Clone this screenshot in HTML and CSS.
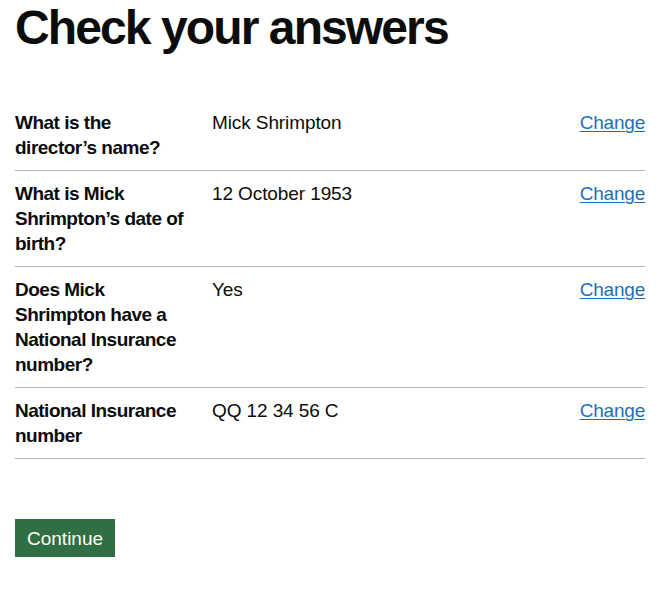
FILE: index.html
```html
<!DOCTYPE html>
<html lang="en">
<head>
<meta charset="utf-8">
<title>Check your answers</title>
<link rel="stylesheet" href="styles.css">
</head>
<body>
<main class="page">
  <h1 class="heading">Check your answers</h1>
  <dl class="summary">
    <div class="row">
      <dt class="key">What is the director’s name?</dt>
      <dd class="value">Mick Shrimpton</dd>
      <dd class="actions"><a class="link" href="#">Change</a></dd>
    </div>
    <div class="row">
      <dt class="key">What is Mick Shrimpton’s date of birth?</dt>
      <dd class="value">12 October 1953</dd>
      <dd class="actions"><a class="link" href="#">Change</a></dd>
    </div>
    <div class="row">
      <dt class="key">Does Mick Shrimpton have a National Insurance number?</dt>
      <dd class="value">Yes</dd>
      <dd class="actions"><a class="link" href="#">Change</a></dd>
    </div>
    <div class="row">
      <dt class="key">National Insurance number</dt>
      <dd class="value">QQ 12 34 56 C</dd>
      <dd class="actions"><a class="link" href="#">Change</a></dd>
    </div>
  </dl>
  <button class="button" type="button">Continue</button>
</main>
</body>
</html>
```

FILE: styles.css
```css
html, body {
  margin: 0;
  padding: 0;
  background: #ffffff;
}
body {
  font-family: "Liberation Sans", Arial, sans-serif;
  color: #0b0c0c;
}
.page {
  padding: 0 15px;
}
.heading {
  margin: 0 0 47px;
  padding-top: 3px;
  font-size: 48px;
  line-height: 50px;
  font-weight: 700;
  letter-spacing: -1.9px;
}
.summary {
  margin: 0 0 60px;
  font-size: 19px;
  line-height: 25px;
}
.row {
  display: grid;
  grid-template-columns: 177px 1fr auto;
  column-gap: 20px;
  border-bottom: 1px solid #b1b4b6;
  padding: 10px 0;
}
.key {
  margin: 0;
  font-weight: 700;
  letter-spacing: -0.5px;
}
.value {
  margin: 0;
  letter-spacing: -0.1px;
}
.actions {
  margin: 0;
  text-align: right;
}
.link {
  color: #1d70b8;
  text-decoration: underline;
  text-decoration-thickness: 1px;
  text-underline-offset: 2px;
  letter-spacing: -0.2px;
}
.button {
  font-family: "Liberation Sans", Arial, sans-serif;
  font-size: 19px;
  line-height: 19px;
  color: #ffffff;
  background: #306e43;
  border: 2px solid transparent;
  border-radius: 0;
  padding: 8px 10px 7px;
  margin: 0;
  box-shadow: 0 2px 0 #0d2b17;
  cursor: pointer;
}
```
